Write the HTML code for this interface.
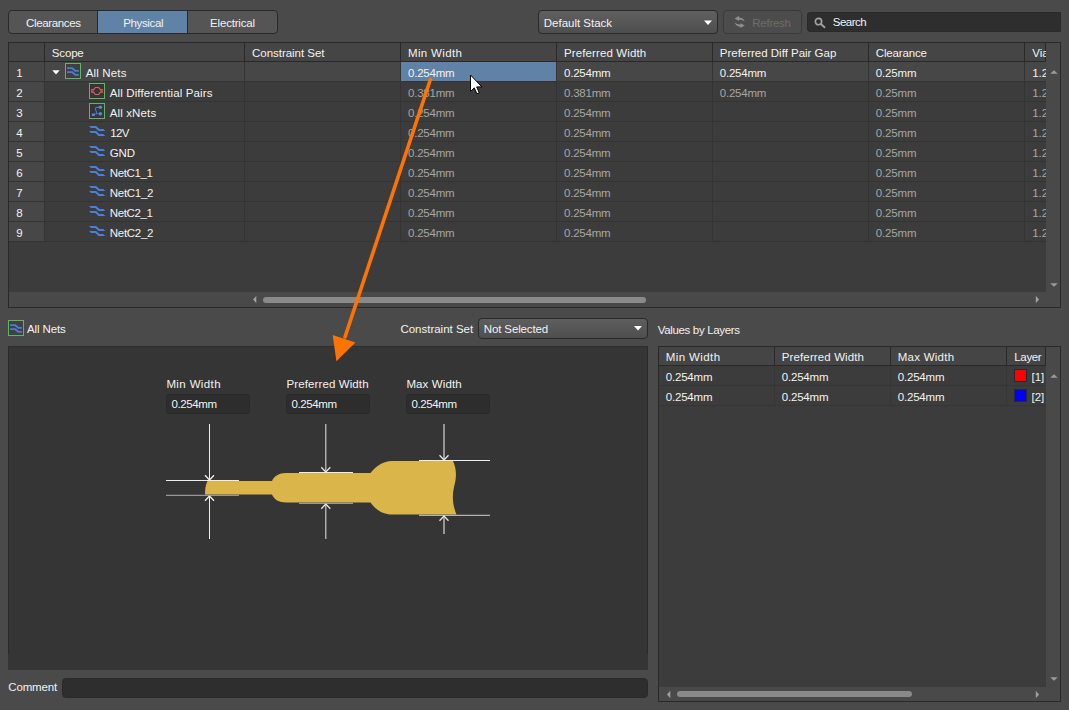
<!DOCTYPE html>
<html><head><meta charset="utf-8"><title>Constraint Manager</title>
<style>
*{box-sizing:border-box}
html,body{margin:0;padding:0}
body{width:1069px;height:710px;background:#4a4a4a;position:relative;overflow:hidden;font-family:"Liberation Sans",sans-serif;font-size:12px;color:#f2f2f2}
.a{position:absolute}
.t{position:absolute;white-space:pre;line-height:14px;height:14px;font-size:11.5px}
svg{position:absolute;overflow:visible}
</style></head><body>

<!-- ===== top toolbar ===== -->
<div class="a" style="left:8px;top:10px;width:270px;height:24px;border:1px solid #292929;border-radius:4px;background:#555"></div>
<div class="a" style="left:97px;top:11px;width:91px;height:22px;background:#5f82a6;border-left:1px solid #292929;border-right:1px solid #292929"></div>
<div class="a" style="left:538px;top:10px;width:180px;height:24px;border:1px solid #292929;border-radius:4px;background:linear-gradient(#606060,#4e4e4e)"></div>
<svg style="left:703px;top:20px" width="10" height="6"><path d="M1 0.5h8l-4 4.5z" fill="#fff"/></svg>
<div class="a" style="left:723px;top:10px;width:79px;height:24px;border:1px solid #3a3a3a;border-radius:4px;background:#4c4c4c"></div>
<svg style="left:734px;top:16px" width="12" height="13" viewBox="0 0 12 13"><path d="M0.6 2.6L4.9 0.1V1.4C7.5 1.4 9.8 2.8 10.8 5.6C9.3 4.2 7.5 3.8 4.9 3.8V5Z M10.8 9.6L6.5 12.1V10.8C3.9 10.8 1.6 9.4 0.6 6.6C2.1 8 3.9 8.4 6.5 8.4V7.2Z" fill="#8e8e8e"/></svg>
<div class="a" style="left:807px;top:12px;width:254px;height:20px;background:#2e2e2e;border:1px solid #2a2a2a;border-radius:3px 0 0 3px"></div>
<svg style="left:814px;top:17px" width="12" height="12" viewBox="0 0 12 12"><circle cx="4.5" cy="4.6" r="3.15" fill="none" stroke="#a2a2a2" stroke-width="1.7"/><path d="M7.2 7.3L10.5 10.2" stroke="#a2a2a2" stroke-width="1.8" stroke-linecap="round"/></svg>

<!-- ===== top grid ===== -->
<div class="a" style="left:8px;top:42px;width:1053px;height:266px;background:#3c3c3c;border:1px solid #292929"></div>
<!-- header -->
<div class="a" style="left:9px;top:43px;width:1037px;height:18px;background:#454545"></div>
<div class="a" style="left:9px;top:61px;width:1037px;height:1px;background:#292929"></div>
<!-- row number column -->
<div class="a" style="left:9px;top:62px;width:35px;height:180px;background:#474747"></div>
<!-- selected row -->
<div class="a" style="left:9px;top:62px;width:1037px;height:19px;background:#474747"></div>
<div class="a" style="left:401px;top:62px;width:155px;height:19px;background:#5f82a6"></div>
<div class="a" style="left:44px;top:43px;width:1px;height:18px;background:#292929"></div>
<div class="a" style="left:44px;top:62px;width:1px;height:180px;background:#343434"></div>
<div class="a" style="left:244px;top:43px;width:1px;height:18px;background:#292929"></div>
<div class="a" style="left:244px;top:62px;width:1px;height:180px;background:#343434"></div>
<div class="a" style="left:400px;top:43px;width:1px;height:18px;background:#292929"></div>
<div class="a" style="left:400px;top:62px;width:1px;height:180px;background:#343434"></div>
<div class="a" style="left:556px;top:43px;width:1px;height:18px;background:#292929"></div>
<div class="a" style="left:556px;top:62px;width:1px;height:180px;background:#343434"></div>
<div class="a" style="left:712px;top:43px;width:1px;height:18px;background:#292929"></div>
<div class="a" style="left:712px;top:62px;width:1px;height:180px;background:#343434"></div>
<div class="a" style="left:868px;top:43px;width:1px;height:18px;background:#292929"></div>
<div class="a" style="left:868px;top:62px;width:1px;height:180px;background:#343434"></div>
<div class="a" style="left:1024px;top:43px;width:1px;height:18px;background:#292929"></div>
<div class="a" style="left:1024px;top:62px;width:1px;height:180px;background:#343434"></div>
<div class="a" style="left:9px;top:81px;width:1037px;height:1px;background:#343434"></div>
<div class="a" style="left:9px;top:101px;width:1037px;height:1px;background:#343434"></div>
<div class="a" style="left:9px;top:121px;width:1037px;height:1px;background:#343434"></div>
<div class="a" style="left:9px;top:141px;width:1037px;height:1px;background:#343434"></div>
<div class="a" style="left:9px;top:161px;width:1037px;height:1px;background:#343434"></div>
<div class="a" style="left:9px;top:181px;width:1037px;height:1px;background:#343434"></div>
<div class="a" style="left:9px;top:201px;width:1037px;height:1px;background:#343434"></div>
<div class="a" style="left:9px;top:221px;width:1037px;height:1px;background:#343434"></div>
<div class="a" style="left:9px;top:241px;width:1037px;height:1px;background:#343434"></div>
<div class="a" style="left:1045px;top:43px;width:1px;height:18px;background:#292929"></div>
<!-- scrollbars -->
<div class="a" style="left:1046px;top:43px;width:14px;height:264px;background:#494949"></div>
<div class="a" style="left:9px;top:292px;width:1051px;height:15px;background:#494949"></div>
<div class="a" style="left:263px;top:297px;width:383px;height:6px;border-radius:3px;background:#8a8a8a"></div>
<svg style="left:252px;top:295px" width="5" height="9"><path d="M4.3 0.8v7.4L1 4.5z" fill="#a0a0a0"/></svg>
<svg style="left:1035px;top:295px" width="5" height="9"><path d="M0.8 0.8v7.4L4.1 4.5z" fill="#a0a0a0"/></svg>
<svg style="left:1049.7px;top:69.8px" width="8" height="4"><path d="M0.3 3.7h7.4L4 0.3z" fill="#9c9c9c"/></svg>
<svg style="left:1049.7px;top:282.6px" width="8" height="4"><path d="M0.3 0.3h7.4L4 3.7z" fill="#9c9c9c"/></svg>

<!-- tree icons -->
<svg style="left:52px;top:70px" width="8" height="5"><path d="M0.3 0.2h7.4L4 4.6z" fill="#fff"/></svg>
<svg style="left:65px;top:63px" width="16" height="16" viewBox="0 0 16 16"><rect x="0.5" y="0.5" width="15" height="15" fill="rgba(45,32,45,0.22)" stroke="#60b660" stroke-width="1"/><path d="M2.1 5.1H7L10.5 7.9H13.9 M2.1 9.1H7L10.5 11.9H13.9" fill="none" stroke="#4a7cd6" stroke-width="1.9" stroke-linejoin="round"/></svg>
<svg style="left:89px;top:83px" width="16" height="16" viewBox="0 0 16 16"><rect x="0.5" y="0.5" width="15" height="15" fill="rgba(45,32,45,0.22)" stroke="#60b660" stroke-width="1"/><path d="M2 6.8H4.5L6.3 4.5H9.7L11.5 6.8H14 M2 9.2H4.5L6.3 11.5H9.7L11.5 9.2H14" fill="none" stroke="#e25c5c" stroke-width="1.2" stroke-linejoin="round"/><path d="M2 8H4.4 M11.6 8H14" stroke="#e25c5c" stroke-opacity="0.6" stroke-width="1.4"/></svg>
<svg style="left:89px;top:103px" width="16" height="16" viewBox="0 0 16 16"><rect x="0.5" y="0.5" width="15" height="15" fill="rgba(45,32,45,0.22)" stroke="#60b660" stroke-width="1"/><path d="M11.4 4.4H8C6.5 4.4 6.3 5.5 6.5 6.5C6.8 7.8 7.5 8 7.5 9.5V10.8 M4.3 11.7L7.5 10.7H11.4" fill="none" stroke="#4a74c9" stroke-width="1.1"/><rect x="2.9" y="10.4" width="2.8" height="2.7" rx="0.6" fill="#5b84dd"/><circle cx="11.4" cy="4.3" r="1.7" fill="#5b84dd"/><circle cx="11.4" cy="10.8" r="1.7" fill="#5b84dd"/></svg>
<svg style="left:89px;top:122px" width="16" height="16" viewBox="0 0 16 16"><path d="M0 4H7.2L10.3 7H14.3L16.3 9H9.5L6.4 6H2z M0 9H7.2L10.3 11.9H14.3L16.3 13.9H9.5L6.4 11H2z" fill="#4a80dc"/></svg>
<svg style="left:89px;top:142px" width="16" height="16" viewBox="0 0 16 16"><path d="M0 4H7.2L10.3 7H14.3L16.3 9H9.5L6.4 6H2z M0 9H7.2L10.3 11.9H14.3L16.3 13.9H9.5L6.4 11H2z" fill="#4a80dc"/></svg>
<svg style="left:89px;top:162px" width="16" height="16" viewBox="0 0 16 16"><path d="M0 4H7.2L10.3 7H14.3L16.3 9H9.5L6.4 6H2z M0 9H7.2L10.3 11.9H14.3L16.3 13.9H9.5L6.4 11H2z" fill="#4a80dc"/></svg>
<svg style="left:89px;top:182px" width="16" height="16" viewBox="0 0 16 16"><path d="M0 4H7.2L10.3 7H14.3L16.3 9H9.5L6.4 6H2z M0 9H7.2L10.3 11.9H14.3L16.3 13.9H9.5L6.4 11H2z" fill="#4a80dc"/></svg>
<svg style="left:89px;top:202px" width="16" height="16" viewBox="0 0 16 16"><path d="M0 4H7.2L10.3 7H14.3L16.3 9H9.5L6.4 6H2z M0 9H7.2L10.3 11.9H14.3L16.3 13.9H9.5L6.4 11H2z" fill="#4a80dc"/></svg>
<svg style="left:89px;top:222px" width="16" height="16" viewBox="0 0 16 16"><path d="M0 4H7.2L10.3 7H14.3L16.3 9H9.5L6.4 6H2z M0 9H7.2L10.3 11.9H14.3L16.3 13.9H9.5L6.4 11H2z" fill="#4a80dc"/></svg>
<svg style="left:8px;top:320px" width="16" height="16" viewBox="0 0 16 16"><rect x="0.5" y="0.5" width="15" height="15" fill="rgba(45,32,45,0.22)" stroke="#60b660" stroke-width="1"/><path d="M2.1 5.1H7L10.5 7.9H13.9 M2.1 9.1H7L10.5 11.9H13.9" fill="none" stroke="#4a7cd6" stroke-width="1.9" stroke-linejoin="round"/></svg>

<!-- ===== middle labels ===== -->
<div class="a" style="left:478px;top:318px;width:170px;height:21px;border:1px solid #292929;border-radius:4px;background:linear-gradient(#5e5e5e,#4e4e4e)"></div>
<svg style="left:633px;top:326px" width="10" height="6"><path d="M1 0h8l-4 4.6z" fill="#fff"/></svg>

<!-- ===== diagram panel ===== -->
<div class="a" style="left:8px;top:346px;width:640px;height:324px;background:#353535"></div>
<div class="a" style="left:8px;top:346px;width:1px;height:308px;background:#2a2a2a"></div>
<div class="a" style="left:647px;top:346px;width:1px;height:308px;background:#2a2a2a"></div>
<div class="a" style="left:8px;top:346px;width:640px;height:1px;background:#2e2e2e"></div>
<div class="a" style="left:166px;top:394px;width:84px;height:20px;background:#2d2d2d;border:1px solid #292929;border-radius:3px"></div>
<div class="a" style="left:286px;top:394px;width:84px;height:20px;background:#2d2d2d;border:1px solid #292929;border-radius:3px"></div>
<div class="a" style="left:406px;top:394px;width:84px;height:20px;background:#2d2d2d;border:1px solid #292929;border-radius:3px"></div>
<svg style="left:0;top:0" width="1069" height="710" viewBox="0 0 1069 710">
 <!-- track -->
 <path fill="#d9b54a" d="M207.5 481 H272 C274 476 279 473 286 473 H370.5 C376 466 383 461 392 461 H453 C457 470 456.5 478 454 487 C452 496 452.5 505 456.5 514.5 H392 C383 514.5 376 510 370.5 502.5 H286 C279 502.5 274 499.5 272 494.5 H205 C205 489 205.5 485 207.5 481Z"/>
 <g stroke-width="1" fill="none">
  <path stroke="#ededed" d="M166 480.5H239 M209.5 424V480 M209.5 496V539"/>
  <path stroke="#ededed" stroke-width="1.3" d="M205 475.3L209.5 480L214 475.3 M205 500.7L209.5 496L214 500.7"/>
  <path stroke="#b0b0b0" d="M166 495.3H239"/>
  <path stroke="#ededed" d="M299 472.5H353"/>
  <path stroke="#c8c8c8" stroke-width="1.2" d="M325.8 424V472 M325.8 504V539"/>
  <path stroke="#e4e4e4" stroke-width="1.3" d="M321.3 467.3L325.8 472L330.3 467.3 M321.3 508.7L325.8 504L330.3 508.7"/>
  <path stroke="#b4b4b4" d="M299 503.3H353"/>
  <path stroke="#ededed" d="M419 460.5H490"/>
  <path stroke="#d0d0d0" d="M419 515.3H490"/>
  <path stroke="#d4d4d4" stroke-width="1.2" d="M444 424V460 M444 516V534"/>
  <path stroke="#e4e4e4" stroke-width="1.3" d="M439.5 455.3L444 460L448.5 455.3 M439.5 520.7L444 516L448.5 520.7"/>
 </g>
</svg>

<!-- comment -->
<div class="a" style="left:62px;top:678px;width:586px;height:20px;background:#2e2e2e;border:1px solid #2a2a2a;border-radius:4px"></div>

<!-- ===== right grid ===== -->
<div class="a" style="left:658px;top:346px;width:403px;height:356px;background:#3c3c3c;border:1px solid #292929"></div>
<div class="a" style="left:659px;top:347px;width:387px;height:18px;background:#454545"></div>
<div class="a" style="left:659px;top:365px;width:387px;height:1px;background:#292929"></div>
<div class="a" style="left:1045px;top:347px;width:1px;height:18px;background:#292929"></div>
<div class="a" style="left:774px;top:347px;width:1px;height:18px;background:#292929"></div>
<div class="a" style="left:890px;top:347px;width:1px;height:18px;background:#292929"></div>
<div class="a" style="left:1006px;top:347px;width:1px;height:18px;background:#292929"></div>
<div class="a" style="left:774px;top:366px;width:1px;height:40px;background:#363636"></div>
<div class="a" style="left:890px;top:366px;width:1px;height:40px;background:#363636"></div>
<div class="a" style="left:1006px;top:366px;width:1px;height:40px;background:#363636"></div>
<div class="a" style="left:659px;top:385px;width:387px;height:1px;background:#363636"></div>
<div class="a" style="left:659px;top:405px;width:387px;height:1px;background:#363636"></div>
<div class="a" style="left:1014px;top:369px;width:13px;height:13px;background:#ff0000;border:1px solid #292929"></div>
<div class="a" style="left:1014px;top:389px;width:13px;height:13px;background:#0000ff;border:1px solid #292929"></div>
<div class="a" style="left:1046px;top:347px;width:14px;height:354px;background:#494949"></div>
<div class="a" style="left:659px;top:687px;width:401px;height:14px;background:#494949"></div>
<div class="a" style="left:677px;top:691px;width:235px;height:6px;border-radius:3px;background:#8a8a8a"></div>
<svg style="left:666px;top:690px" width="5" height="9"><path d="M4.3 0.8v7.4L1 4.5z" fill="#a0a0a0"/></svg>
<svg style="left:1035px;top:690px" width="5" height="9"><path d="M0.8 0.8v7.4L4.1 4.5z" fill="#a0a0a0"/></svg>
<svg style="left:1049.7px;top:373.8px" width="8" height="4"><path d="M0.3 3.7h7.4L4 0.3z" fill="#9c9c9c"/></svg>
<svg style="left:1049.7px;top:676.6px" width="8" height="4"><path d="M0.3 0.3h7.4L4 3.7z" fill="#9c9c9c"/></svg>

<!-- ===== text ===== -->
<span class="t" style="left:26px;top:16.2px;color:#f2f2f2;letter-spacing:-0.35px;">Clearances</span>
<span class="t" style="left:123.3px;top:16.2px;color:#f2f2f2;letter-spacing:-0.38px;">Physical</span>
<span class="t" style="left:210.1px;top:16.2px;color:#f2f2f2;letter-spacing:-0.19px;">Electrical</span>
<span class="t" style="left:543.8px;top:16.2px;color:#f2f2f2;letter-spacing:-0.01px;">Default Stack</span>
<span class="t" style="left:752.3px;top:16.2px;color:#6c6c6c;letter-spacing:-0.27px;">Refresh</span>
<span class="t" style="left:832.8px;top:15.2px;color:#f2f2f2;letter-spacing:-0.51px;">Search</span>
<span class="t" style="left:51.8px;top:46.2px;color:#f2f2f2;letter-spacing:-0.16px;">Scope</span>
<span class="t" style="left:252px;top:46.2px;color:#f2f2f2;letter-spacing:-0.03px;">Constraint Set</span>
<span class="t" style="left:408px;top:46.2px;color:#f2f2f2;letter-spacing:0.34px;">Min Width</span>
<span class="t" style="left:564px;top:46.2px;color:#f2f2f2;letter-spacing:0.12px;">Preferred Width</span>
<span class="t" style="left:719.8px;top:46.2px;color:#f2f2f2;letter-spacing:-0.01px;">Preferred Diff Pair Gap</span>
<span class="t" style="left:875.8px;top:46.2px;color:#f2f2f2;letter-spacing:-0.15px;">Clearance</span>
<span class="t" style="left:1032.2px;top:46.2px;color:#f2f2f2;width:13.8px;overflow:hidden;">Via</span>
<span class="t" style="left:16.3px;top:66.2px;color:#f2f2f2;">1</span>
<span class="t" style="left:85.8px;top:66.2px;color:#f2f2f2;letter-spacing:0.15px;">All Nets</span>
<span class="t" style="left:408px;top:66.2px;color:#f2f2f2;letter-spacing:-0.23px;">0.254mm</span>
<span class="t" style="left:564px;top:66.2px;color:#f2f2f2;letter-spacing:-0.23px;">0.254mm</span>
<span class="t" style="left:719.8px;top:66.2px;color:#f2f2f2;letter-spacing:-0.23px;">0.254mm</span>
<span class="t" style="left:875.8px;top:66.2px;color:#f2f2f2;letter-spacing:-0.14px;">0.25mm</span>
<span class="t" style="left:1032.2px;top:66.2px;color:#f2f2f2;width:13.8px;overflow:hidden;">1.2</span>
<span class="t" style="left:16.3px;top:86.2px;color:#f2f2f2;">2</span>
<span class="t" style="left:109.8px;top:86.2px;color:#f2f2f2;letter-spacing:0.12px;">All Differential Pairs</span>
<span class="t" style="left:408px;top:86.2px;color:#a6a6a6;letter-spacing:-0.23px;">0.381mm</span>
<span class="t" style="left:564px;top:86.2px;color:#a6a6a6;letter-spacing:-0.23px;">0.381mm</span>
<span class="t" style="left:719.8px;top:86.2px;color:#a6a6a6;letter-spacing:-0.23px;">0.254mm</span>
<span class="t" style="left:875.8px;top:86.2px;color:#a6a6a6;letter-spacing:-0.14px;">0.25mm</span>
<span class="t" style="left:1032.2px;top:86.2px;color:#a6a6a6;width:13.8px;overflow:hidden;">1.2</span>
<span class="t" style="left:16.3px;top:106.2px;color:#f2f2f2;">3</span>
<span class="t" style="left:109.8px;top:106.2px;color:#f2f2f2;letter-spacing:0.12px;">All xNets</span>
<span class="t" style="left:408px;top:106.2px;color:#a6a6a6;letter-spacing:-0.23px;">0.254mm</span>
<span class="t" style="left:564px;top:106.2px;color:#a6a6a6;letter-spacing:-0.23px;">0.254mm</span>
<span class="t" style="left:875.8px;top:106.2px;color:#a6a6a6;letter-spacing:-0.14px;">0.25mm</span>
<span class="t" style="left:1032.2px;top:106.2px;color:#a6a6a6;width:13.8px;overflow:hidden;">1.2</span>
<span class="t" style="left:16.3px;top:126.2px;color:#f2f2f2;">4</span>
<span class="t" style="left:110.2px;top:126.2px;color:#f2f2f2;letter-spacing:-0.66px;">12V</span>
<span class="t" style="left:408px;top:126.2px;color:#a6a6a6;letter-spacing:-0.23px;">0.254mm</span>
<span class="t" style="left:564px;top:126.2px;color:#a6a6a6;letter-spacing:-0.23px;">0.254mm</span>
<span class="t" style="left:875.8px;top:126.2px;color:#a6a6a6;letter-spacing:-0.14px;">0.25mm</span>
<span class="t" style="left:1032.2px;top:126.2px;color:#a6a6a6;width:13.8px;overflow:hidden;">1.2</span>
<span class="t" style="left:16.3px;top:146.2px;color:#f2f2f2;">5</span>
<span class="t" style="left:109.8px;top:146.2px;color:#f2f2f2;letter-spacing:-0.15px;">GND</span>
<span class="t" style="left:408px;top:146.2px;color:#a6a6a6;letter-spacing:-0.23px;">0.254mm</span>
<span class="t" style="left:564px;top:146.2px;color:#a6a6a6;letter-spacing:-0.23px;">0.254mm</span>
<span class="t" style="left:875.8px;top:146.2px;color:#a6a6a6;letter-spacing:-0.14px;">0.25mm</span>
<span class="t" style="left:1032.2px;top:146.2px;color:#a6a6a6;width:13.8px;overflow:hidden;">1.2</span>
<span class="t" style="left:16.3px;top:166.2px;color:#f2f2f2;">6</span>
<span class="t" style="left:109.8px;top:166.2px;color:#f2f2f2;letter-spacing:-0.37px;">NetC1_1</span>
<span class="t" style="left:408px;top:166.2px;color:#a6a6a6;letter-spacing:-0.23px;">0.254mm</span>
<span class="t" style="left:564px;top:166.2px;color:#a6a6a6;letter-spacing:-0.23px;">0.254mm</span>
<span class="t" style="left:875.8px;top:166.2px;color:#a6a6a6;letter-spacing:-0.14px;">0.25mm</span>
<span class="t" style="left:1032.2px;top:166.2px;color:#a6a6a6;width:13.8px;overflow:hidden;">1.2</span>
<span class="t" style="left:16.3px;top:186.2px;color:#f2f2f2;">7</span>
<span class="t" style="left:109.8px;top:186.2px;color:#f2f2f2;letter-spacing:-0.3px;">NetC1_2</span>
<span class="t" style="left:408px;top:186.2px;color:#a6a6a6;letter-spacing:-0.23px;">0.254mm</span>
<span class="t" style="left:564px;top:186.2px;color:#a6a6a6;letter-spacing:-0.23px;">0.254mm</span>
<span class="t" style="left:875.8px;top:186.2px;color:#a6a6a6;letter-spacing:-0.14px;">0.25mm</span>
<span class="t" style="left:1032.2px;top:186.2px;color:#a6a6a6;width:13.8px;overflow:hidden;">1.2</span>
<span class="t" style="left:16.3px;top:206.2px;color:#f2f2f2;">8</span>
<span class="t" style="left:109.8px;top:206.2px;color:#f2f2f2;letter-spacing:-0.37px;">NetC2_1</span>
<span class="t" style="left:408px;top:206.2px;color:#a6a6a6;letter-spacing:-0.23px;">0.254mm</span>
<span class="t" style="left:564px;top:206.2px;color:#a6a6a6;letter-spacing:-0.23px;">0.254mm</span>
<span class="t" style="left:875.8px;top:206.2px;color:#a6a6a6;letter-spacing:-0.14px;">0.25mm</span>
<span class="t" style="left:1032.2px;top:206.2px;color:#a6a6a6;width:13.8px;overflow:hidden;">1.2</span>
<span class="t" style="left:16.3px;top:226.2px;color:#f2f2f2;">9</span>
<span class="t" style="left:109.8px;top:226.2px;color:#f2f2f2;letter-spacing:-0.3px;">NetC2_2</span>
<span class="t" style="left:408px;top:226.2px;color:#a6a6a6;letter-spacing:-0.23px;">0.254mm</span>
<span class="t" style="left:564px;top:226.2px;color:#a6a6a6;letter-spacing:-0.23px;">0.254mm</span>
<span class="t" style="left:875.8px;top:226.2px;color:#a6a6a6;letter-spacing:-0.14px;">0.25mm</span>
<span class="t" style="left:1032.2px;top:226.2px;color:#a6a6a6;width:13.8px;overflow:hidden;">1.2</span>
<span class="t" style="left:27.1px;top:322.2px;color:#f2f2f2;letter-spacing:-0.14px;">All Nets</span>
<span class="t" style="left:400.4px;top:322.2px;color:#f2f2f2;letter-spacing:-0.01px;">Constraint Set</span>
<span class="t" style="left:483.8px;top:322.2px;color:#f2f2f2;letter-spacing:-0.13px;">Not Selected</span>
<span class="t" style="left:657.8px;top:323.2px;color:#f2f2f2;letter-spacing:-0.35px;">Values by Layers</span>
<span class="t" style="left:665.8px;top:350.2px;color:#f2f2f2;letter-spacing:0.39px;">Min Width</span>
<span class="t" style="left:781.8px;top:350.2px;color:#f2f2f2;letter-spacing:0.12px;">Preferred Width</span>
<span class="t" style="left:897.8px;top:350.2px;color:#f2f2f2;letter-spacing:0.24px;">Max Width</span>
<span class="t" style="left:1014.3px;top:350.2px;color:#f2f2f2;letter-spacing:-0.34px;width:31.7px;overflow:hidden;">Layer</span>
<span class="t" style="left:665.8px;top:370.2px;color:#f2f2f2;letter-spacing:-0.21px;">0.254mm</span>
<span class="t" style="left:781.8px;top:370.2px;color:#f2f2f2;letter-spacing:-0.21px;">0.254mm</span>
<span class="t" style="left:897.8px;top:370.2px;color:#f2f2f2;letter-spacing:-0.21px;">0.254mm</span>
<span class="t" style="left:1031.5px;top:370.2px;color:#f2f2f2;width:14.5px;overflow:hidden;">[1]</span>
<span class="t" style="left:665.8px;top:390.2px;color:#f2f2f2;letter-spacing:-0.21px;">0.254mm</span>
<span class="t" style="left:781.8px;top:390.2px;color:#f2f2f2;letter-spacing:-0.21px;">0.254mm</span>
<span class="t" style="left:897.8px;top:390.2px;color:#f2f2f2;letter-spacing:-0.21px;">0.254mm</span>
<span class="t" style="left:1031.5px;top:390.2px;color:#f2f2f2;width:14.5px;overflow:hidden;">[2]</span>
<span class="t" style="left:166.4px;top:377.2px;color:#f2f2f2;letter-spacing:0.38px;">Min Width</span>
<span class="t" style="left:286.6px;top:377.2px;color:#f2f2f2;letter-spacing:0.1px;">Preferred Width</span>
<span class="t" style="left:406.4px;top:377.2px;color:#f2f2f2;letter-spacing:0.12px;">Max Width</span>
<span class="t" style="left:171.6px;top:397.2px;color:#f2f2f2;letter-spacing:-0.42px;">0.254mm</span>
<span class="t" style="left:291.6px;top:397.2px;color:#f2f2f2;letter-spacing:-0.42px;">0.254mm</span>
<span class="t" style="left:411.6px;top:397.2px;color:#f2f2f2;letter-spacing:-0.42px;">0.254mm</span>
<span class="t" style="left:8.3px;top:680.2px;color:#f2f2f2;letter-spacing:-0.17px;">Comment</span>

<!-- ===== annotation arrow + cursor ===== -->
<svg style="left:0;top:0" width="1069" height="710" viewBox="0 0 1069 710">
 <path d="M430.4 79.5L345 337" stroke="#ff7300" stroke-width="3.6" stroke-linecap="round" fill="none"/>
 <path d="M336.4 361.3L332.7 335L355.4 342.6Z" fill="#ff7300"/>
 <path d="M470.5 75v16.4l3.8-3.5l2.6 5.9l2.4-1l-2.6-5.9h5.2z" fill="#fff" stroke="#000" stroke-width="1" stroke-linejoin="miter"/>
</svg>
</body></html>
